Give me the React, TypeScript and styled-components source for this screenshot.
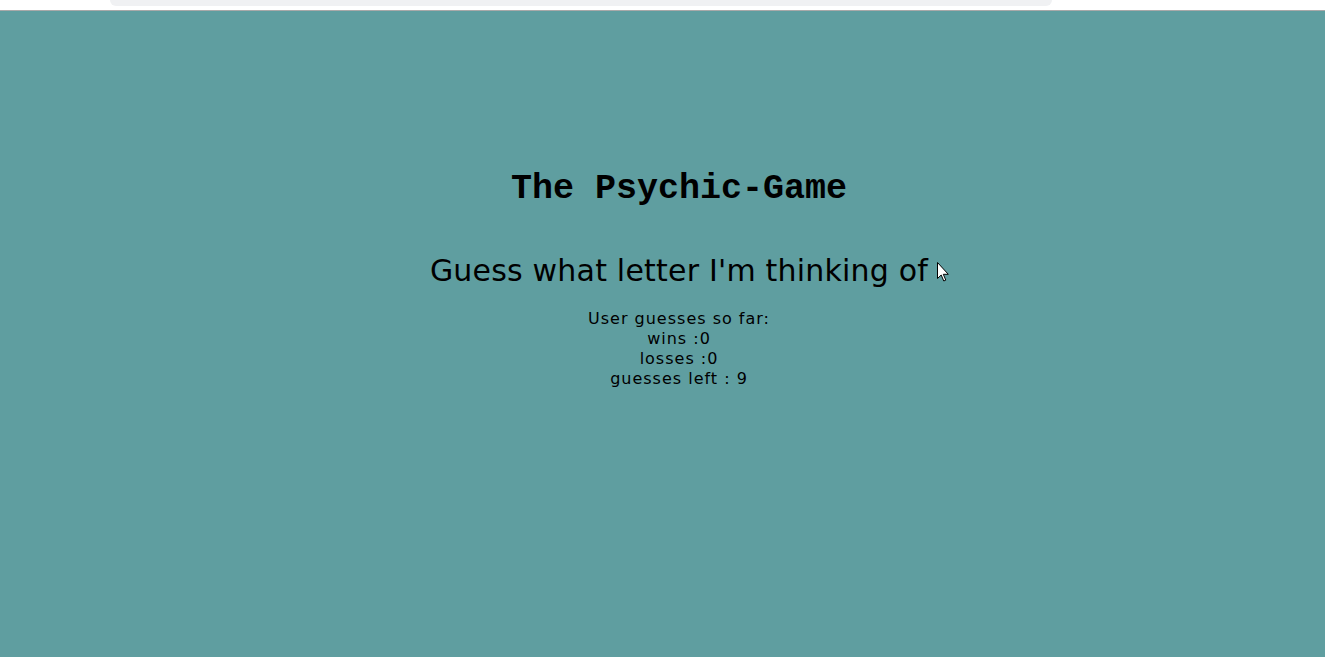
import React from "react";
import styled, { createGlobalStyle } from "styled-components";

const Global = createGlobalStyle`
  html, body { margin: 0; padding: 0; background: #5f9ea0; }
  body { overflow: hidden; }
`;

const Page = styled.div`
  width: 1325px;
  height: 657px;
  display: flex;
  flex-direction: column;
  background: #5f9ea0;
`;

const BrowserStrip = styled.div`
  height: 10px;
  background: #ffffff;
  border-bottom: 1px solid #a9a9a9;
  display: flex;
  align-items: flex-start;
  padding-left: 110px;
  box-sizing: content-box;
`;

const Omnibox = styled.div`
  width: 942px;
  height: 6px;
  background: #f0f1f3;
  border-radius: 0 0 10px 10px;
`;

const Main = styled.main`
  flex: 1;
  display: flex;
  flex-direction: column;
  align-items: center;
  padding-left: 33px;
  padding-top: 158px;
  color: #000;
`;

const Title = styled.h1`
  margin: 0;
  font-family: "Liberation Mono", "Courier New", monospace;
  font-weight: bold;
  font-size: 35px;
  line-height: 40px;
`;

const Subtitle = styled.h2`
  position: relative;
  margin: 45px 0 0 0;
  font-family: "DejaVu Sans", Verdana, sans-serif;
  font-weight: normal;
  font-size: 30px;
  letter-spacing: 0.2px;
  line-height: 34px;
`;

const Cursor = styled.svg`
  position: absolute;
  left: calc(100% + 9px);
  top: 8px;
`;

const Stats = styled.div`
  margin-top: 21px;
  display: flex;
  flex-direction: column;
  align-items: center;
  font-family: "DejaVu Sans", Verdana, sans-serif;
  font-size: 16px;
  letter-spacing: 1px;
  line-height: 20px;
`;

export default function App() {
  return (
    <>
      <Global />
      <Page>
        <BrowserStrip>
          <Omnibox />
        </BrowserStrip>
        <Main>
          <Title>The Psychic-Game</Title>
          <Subtitle>
            Guess what letter I'm thinking of
            <Cursor width="12" height="21" viewBox="0 0 12 21">
              <path d="M0.5 0.5 L0.5 16.5 L4.2 13 L6.8 19 L8.8 18.1 L6.3 12.3 L11.3 12.3 Z" fill="#fff" stroke="#000" strokeWidth="1" strokeLinejoin="round" />
            </Cursor>
          </Subtitle>
          <Stats>
            <span>User guesses so far:</span>
            <span>wins :0</span>
            <span>losses :0</span>
            <span>guesses left : 9</span>
          </Stats>
        </Main>
      </Page>
    </>
  );
}
